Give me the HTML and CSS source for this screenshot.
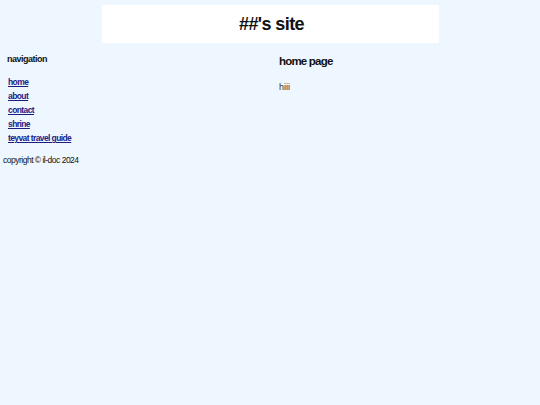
FILE: index.html
```html
<!DOCTYPE html>
<html>
<head>
<meta charset="utf-8">
<link rel="stylesheet" href="styles.css">
</head>
<body>
<header class="site-header"><h1 class="site-title">##'s site</h1></header>
<div class="layout">
  <aside class="sidebar">
    <h3 class="nav-title">navigation</h3>
    <ul class="nav-list">
      <li><a href="#">home</a></li>
      <li><a href="#">about</a></li>
      <li><a href="#">contact</a></li>
      <li><a href="#">shrine</a></li>
      <li><a href="#">teyvat travel guide</a></li>
    </ul>
    <p class="copyright">copyright © il-doc 2024</p>
  </aside>
  <main class="content">
    <h2 class="page-title">home page</h2>
    <p class="page-text">hiii</p>
  </main>
</div>
</body>
</html>
```
FILE: styles.css
```css
html, body {
  margin: 0;
  padding: 0;
  background: #eef6ff;
  font-family: "Liberation Sans", Arial, sans-serif;
  color: #111;
}
.site-header {
  width: 337px;
  height: 38px;
  margin: 5px auto 0;
  background: #ffffff;
  display: flex;
  align-items: center;
  justify-content: center;
}
.site-title {
  margin: 0 0 0 3px;
  font-size: 18px;
  font-weight: bold;
  letter-spacing: -0.6px;
}
.layout {
  display: flex;
}
.sidebar {
  width: 279px;
  flex: none;
}
.nav-title {
  margin: 9px 0 0 7px;
  font-size: 9px;
  font-weight: bold;
  line-height: 14px;
  letter-spacing: -0.5px;
}
.nav-list {
  list-style: none;
  margin: 9px 0 0 8px;
  padding: 0;
}
.nav-list li {
  line-height: 14px;
  font-size: 8.5px;
  font-weight: bold;
  letter-spacing: -0.6px;
}
.nav-list a {
  color: #1c1c85;
}
.copyright {
  margin: 8px 0 0 3px;
  font-size: 8.5px;
  line-height: 14px;
  letter-spacing: -0.5px;
}
.content {
  flex: 1;
}
.page-title {
  margin: 9px 0 0;
  font-size: 11.5px;
  line-height: 18px;
  font-weight: bold;
  letter-spacing: -0.8px;
}
.page-text {
  margin: 10px 0 0;
  font-size: 9px;
  line-height: 14px;
  color: #333;
}
```
